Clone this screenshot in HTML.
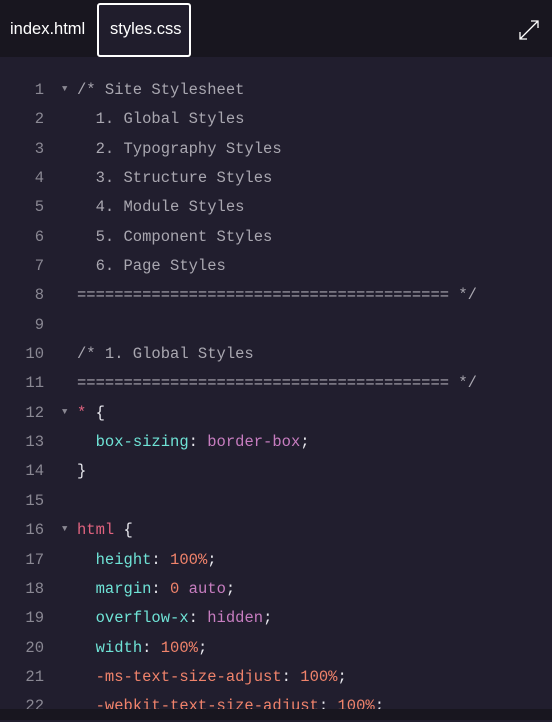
<!DOCTYPE html>
<html><head><style>
*{margin:0;padding:0;box-sizing:border-box}
body{width:552px;height:720px;background:#211e2e;overflow:hidden;position:relative;font-family:"Liberation Sans",sans-serif}
.hdr{position:absolute;left:0;top:0;width:552px;height:57px;background:#18161f}
.t1{position:absolute;left:10px;top:20px;color:#fff;font-size:16.5px}
.t2{position:absolute;left:97px;top:3px;width:94px;height:54px;border:2px solid #fff;border-radius:3px;background:#201d2c;color:#fff;font-size:16.5px;padding:15px 0 0 11px}
.code{position:absolute;left:0;top:76px;width:552px;font-family:"Liberation Mono",monospace;font-size:15.5px}
.l{height:29.35px;line-height:29.35px;white-space:pre;position:relative}
.n{position:absolute;left:0;width:44px;text-align:right;color:#8a8893}
.a{position:absolute;left:62px;top:-1px;color:#8a8893;font-size:9px}
.t{position:absolute;left:77px}
.c{color:#a9a7b0}
.p{color:#6fe3d6}.v{color:#c77dc0}.o{color:#f0836b}.s{color:#e0637f}.w{color:#e8e8ee}
.bot{position:absolute;left:0;top:709px;width:552px;height:11px;background:#18161f}
</style></head><body>
<div class="hdr"><div class="t1">index.html</div><div class="t2">styles.css</div>
<svg style="position:absolute;left:517px;top:18px" width="24" height="24" viewBox="0 0 24 24" fill="none" stroke="#fff" stroke-width="1.3"><path d="M3 21L21 3M14 3h7v7M3 14v7h7"/></svg></div>
<div class="code">
<div class="l"><span class="n">1</span><span class="a">▼</span><span class="t c">/* Site Stylesheet</span></div>
<div class="l"><span class="n">2</span><span class="t c">  1. Global Styles</span></div>
<div class="l"><span class="n">3</span><span class="t c">  2. Typography Styles</span></div>
<div class="l"><span class="n">4</span><span class="t c">  3. Structure Styles</span></div>
<div class="l"><span class="n">5</span><span class="t c">  4. Module Styles</span></div>
<div class="l"><span class="n">6</span><span class="t c">  5. Component Styles</span></div>
<div class="l"><span class="n">7</span><span class="t c">  6. Page Styles</span></div>
<div class="l"><span class="n">8</span><span class="t c">======================================== */</span></div>
<div class="l"><span class="n">9</span></div>
<div class="l"><span class="n">10</span><span class="t c">/* 1. Global Styles</span></div>
<div class="l"><span class="n">11</span><span class="t c">======================================== */</span></div>
<div class="l"><span class="n">12</span><span class="a">▼</span><span class="t"><span class="s">*</span> <span class="w">{</span></span></div>
<div class="l"><span class="n">13</span><span class="t">  <span class="p">box-sizing</span><span class="w">:</span> <span class="v">border-box</span><span class="w">;</span></span></div>
<div class="l"><span class="n">14</span><span class="t w">}</span></div>
<div class="l"><span class="n">15</span></div>
<div class="l"><span class="n">16</span><span class="a">▼</span><span class="t"><span class="s">html</span> <span class="w">{</span></span></div>
<div class="l"><span class="n">17</span><span class="t">  <span class="p">height</span><span class="w">:</span> <span class="o">100%</span><span class="w">;</span></span></div>
<div class="l"><span class="n">18</span><span class="t">  <span class="p">margin</span><span class="w">:</span> <span class="o">0</span> <span class="v">auto</span><span class="w">;</span></span></div>
<div class="l"><span class="n">19</span><span class="t">  <span class="p">overflow-x</span><span class="w">:</span> <span class="v">hidden</span><span class="w">;</span></span></div>
<div class="l"><span class="n">20</span><span class="t">  <span class="p">width</span><span class="w">:</span> <span class="o">100%</span><span class="w">;</span></span></div>
<div class="l"><span class="n">21</span><span class="t">  <span class="o">-ms-text-size-adjust</span><span class="w">:</span> <span class="o">100%</span><span class="w">;</span></span></div>
<div class="l"><span class="n">22</span><span class="t">  <span class="o">-webkit-text-size-adjust</span><span class="w">:</span> <span class="o">100%</span><span class="w">;</span></span></div>
</div>
<div class="bot"></div>
</body></html>
